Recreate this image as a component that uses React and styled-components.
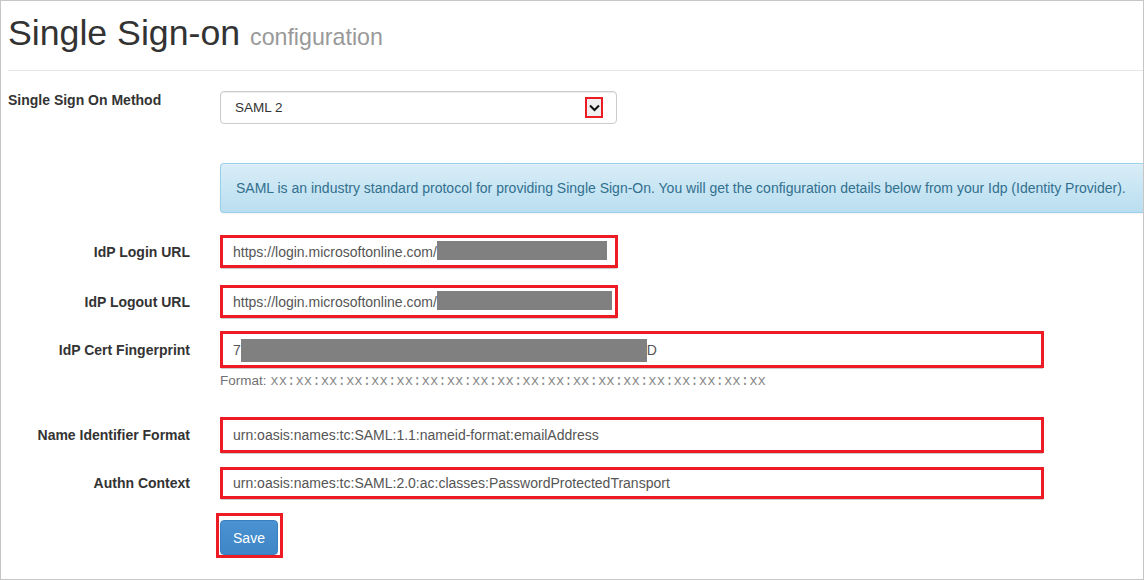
import React from 'react';
import styled, { createGlobalStyle } from 'styled-components';

const GlobalStyle = createGlobalStyle`
	html, body {
		margin: 0;
		padding: 0;
		background: #fff;
	}
	body {
		font-family: "Liberation Sans", Arial, sans-serif;
		color: #333;
	}
`;

const Page = styled.div`
	width: 1144px;
	height: 580px;
	box-sizing: border-box;
	border: 1px solid #c6c6c6;
	overflow: hidden;
	padding-left: 7px;
	background: #fff;
`;

const Title = styled.h1`
	margin: 0;
	padding-top: 13px;
	font-size: 35.7px;
	font-weight: 400;
	line-height: 1.1;
	color: #333;
	white-space: nowrap;
`;

const Subtitle = styled.small`
	font-size: 23.2px;
	color: #999;
`;

const Divider = styled.hr`
	margin: 17px 0 0;
	border: 0;
	border-top: 1px solid #e6e6e6;
	height: 0;
`;

const Row = styled.div`
	display: grid;
	grid-template-columns: 182px 1fr;
	column-gap: 30px;
	align-items: ${(p) => (p.$top ? 'start' : 'center')};
	margin-top: ${(p) => p.$mt}px;
`;

const Label = styled.label`
	font-size: 14px;
	font-weight: 700;
	line-height: 18px;
	color: #333;
	text-align: ${(p) => (p.$left ? 'left' : 'right')};
	white-space: nowrap;
`;

const Select = styled.div`
	width: 397px;
	height: 33px;
	box-sizing: border-box;
	border: 1px solid #ccc;
	border-radius: 4px;
	box-shadow: inset 0 1px 1px rgba(0, 0, 0, 0.075);
	display: flex;
	align-items: center;
	justify-content: space-between;
	padding: 0 13px 0 14px;
	font-size: 13.5px;
	color: #333;
`;

const Chevron = styled.span`
	width: 18px;
	height: 21px;
	box-sizing: border-box;
	border: 2px solid #ed1c24;
	background: #efefef;
	display: flex;
	align-items: center;
	justify-content: center;
`;

const Alert = styled.div`
	height: 50px;
	box-sizing: border-box;
	display: flex;
	align-items: center;
	padding-left: 15px;
	border: 1px solid #9acfea;
	border-right: 0;
	border-radius: 4px 0 0 4px;
	background-image: linear-gradient(to bottom, #d9edf7 0%, #b9def0 100%);
	box-shadow: inset 0 1px 0 rgba(255, 255, 255, 0.25), 0 1px 2px rgba(0, 0, 0, 0.05);
	color: #31708f;
	font-size: 14px;
	white-space: nowrap;
	overflow: hidden;
`;

const Highlight = styled.div`
	width: ${(p) => p.$w}px;
	height: ${(p) => p.$h}px;
	box-sizing: border-box;
	border: 3px solid #ed1c24;
	box-shadow: 0 2px 0 -1px #ccc;
	display: flex;
	align-items: center;
	padding-left: 10px;
	font-size: 14px;
	color: #555;
	white-space: nowrap;
`;

const Redacted = styled.span`
	display: inline-block;
	width: ${(p) => p.$w}px;
	height: ${(p) => p.$h}px;
	background: #808080;
	margin-top: ${(p) => p.$dy || 0}px;
`;

const Help = styled.div`
	grid-column: 2;
	font-size: 13.5px;
	line-height: 18px;
	color: #737373;
	white-space: nowrap;
`;

const Mono = styled.span`
	font-family: "Liberation Mono", "Courier New", monospace;
	font-size: 14px;
	color: #8a8a8a;
`;

const ButtonFrame = styled.div`
	grid-column: 2;
	justify-self: start;
	margin-left: -4px;
	width: 67px;
	height: 45px;
	box-sizing: border-box;
	border: 3px solid #ed1c24;
	padding: 4px 0 0 1px;
`;

const SaveButton = styled.button`
	width: 58px;
	height: 35px;
	border: 1px solid #3a7fc0;
	border-radius: 4px;
	background-image: linear-gradient(to bottom, #4a92d2 0%, #3f86c6 100%);
	color: #fff;
	font-family: "Liberation Sans", Arial, sans-serif;
	font-size: 14px;
	padding: 0;
	cursor: pointer;
`;

const ChevronIcon = () => (
	<svg width="11" height="8" viewBox="0 0 11 8">
		<path d="M1 1.5 L5.5 6 L10 1.5" fill="none" stroke="#111" strokeWidth="2" />
	</svg>
);

const FieldRow = ({ label, mt, w, h, children }) => (
	<Row $mt={mt}>
		<Label>{label}</Label>
		<Highlight $w={w} $h={h}>
			{children}
		</Highlight>
	</Row>
);

export default function App() {
	const fingerprintFormat = Array(20).fill('xx').join(':');

	return (
		<Page>
			<GlobalStyle />
			<Title>
				Single Sign-on <Subtitle>configuration</Subtitle>
			</Title>
			<Divider />

			<Row $mt={20} $top>
				<Label $left>Single Sign On Method</Label>
				<Select>
					<span>SAML 2</span>
					<Chevron>
						<ChevronIcon />
					</Chevron>
				</Select>
			</Row>

			<Row $mt={39}>
				<span />
				<Alert>
					SAML is an industry standard protocol for providing Single Sign-On. You will get the
					configuration details below from your Idp (Identity Provider).
				</Alert>
			</Row>

			<FieldRow label="IdP Login URL" mt={22} w={398} h={33}>
				https://login.microsoftonline.com/
				<Redacted $w={170} $h={19} $dy={-3} />
			</FieldRow>

			<FieldRow label="IdP Logout URL" mt={17} w={398} h={33}>
				https://login.microsoftonline.com/
				<Redacted $w={175} $h={19} $dy={-3} />
			</FieldRow>

			<FieldRow label="IdP Cert Fingerprint" mt={13} w={824} h={37}>
				7
				<Redacted $w={406} $h={23} $dy={2} />
				D
			</FieldRow>

			<Row $mt={4}>
				<Help>
					Format: <Mono>{fingerprintFormat}</Mono>
				</Help>
			</Row>

			<FieldRow label="Name Identifier Format" mt={27} w={824} h={36}>
				urn:oasis:names:tc:SAML:1.1:nameid-format:emailAddress
			</FieldRow>

			<FieldRow label="Authn Context" mt={14} w={824} h={32}>
				urn:oasis:names:tc:SAML:2.0:ac:classes:PasswordProtectedTransport
			</FieldRow>

			<Row $mt={14}>
				<ButtonFrame>
					<SaveButton>Save</SaveButton>
				</ButtonFrame>
			</Row>
		</Page>
	);
}
